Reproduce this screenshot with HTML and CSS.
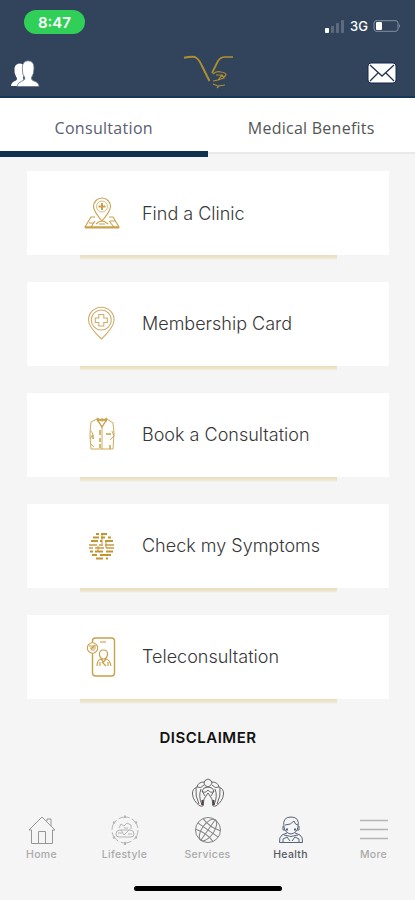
FILE: index.html
```html
<!DOCTYPE html>
<html lang="en">
<head>
    <meta charset="UTF-8">
    <meta name="viewport" content="width=device-width, initial-scale=1.0">
    <title>Health</title>
    <link rel="stylesheet" href="styles.css">
</head>
<body>

    <!-- Header -->
    <header>
        <div class="status-bar">
            <span class="time">8:47</span>
            <div class="signal">
                <svg width="20" height="13" viewBox="0 0 20 13">
                    <rect x="0" y="8" width="4" height="5" rx="1" fill="#fff"/>
                    <g fill="#5b6a7f">
                        <rect x="6" y="6" width="3" height="7" rx="1"/>
                        <rect x="11" y="3" width="3" height="10" rx="1"/>
                        <rect x="16" y="0" width="3" height="13" rx="1"/>
                    </g>
                </svg>
                <span class="network">3G</span>
                <svg width="28" height="12" viewBox="0 0 28 12">
                    <path d="M3 .7H23Q25 1 25 3V9Q25 11 23 11.3H3Q1 11 1 9V3Q1 1 3 .7Z" fill="none" stroke="#8290a0"/>
                    <rect x="3" y="2" width="6" height="8" rx="1" fill="#fff"/>
                    <path d="M26 4q2 2 0 4z" fill="#8290a0"/>
                </svg>
            </div>
        </div>
        <div class="title-bar">
            <svg class="people" width="30" height="28" viewBox="0 0 30 28">
                <path d="M1 26Q1 22 6 20.500Q8 19 6 16.500Q4 13 4.500 8Q5.500 3.500 10 3.500Q15 4 15 10Q15 15 13 17.500L15 26Z" fill="#fff"/>
                <path d="M7 26.500Q7.500 22.500 12 21Q15 20 15 18Q12 15 12.300 8Q12.500 .8 18 .8Q24 .8 24 8Q24 14 21.500 17.500Q21 20 24 21Q29 22.500 29 26.500Z" fill="#fff" stroke="#63738a" stroke-width=".8"/>
            </svg>
            <svg class="logo" width="52" height="36" viewBox="0 0 52 36" fill="none" stroke="#b0902c">
                <path d="M1 3.800Q8 2.300 12 3Q16 5 19 12L26.500 27" stroke-width="1.900"/>
                <path d="M29 19L35 7Q37.500 3 42 3H50" stroke-width="1.700"/>
                <path d="M30 20Q33 16.500 38 18Q43 18.500 43 21L40 24M33 21L39 21L35 26L30 27M39 21L41 24L35 26M30 30L35 32L42 31M34 34L36 32" stroke-width="1.200"/>
            </svg>
            <svg class="mail" width="30" height="22" viewBox="0 0 30 22">
                <rect x="1" y="1" width="28" height="20" rx="3" fill="#fff" stroke="#14264a"/>
                <path d="M3 3L15 14L27 3M3 19L11 11M27 19L19 11" fill="none" stroke="#25344d" stroke-width="1.300"/>
            </svg>
        </div>
    </header>

    <!-- Tabs -->
    <nav class="tabs">
        <a class="tab active"><span class="tab-one">Consultation</span></a>
        <a class="tab"><span class="tab-two">Medical Benefits</span></a>
    </nav>

    <!-- Health options -->
    <main>
        <section class="card">
            <svg class="icon" width="36" height="40" viewBox="0 0 36 40">
                <path d="M18 28Q9.500 18 9.500 13.500A8.500 8.500 0 0 1 26.500 13.500Q26.500 18 18 28Z"/>
                <circle cx="18" cy="13.500" r="5.500" stroke-width=".7"/>
                <path d="M18 10v7M14.500 13.500h7" stroke-width="2"/>
                <path d="M11 24H7L1 34H35L29 24H25M7 34L11 28M5 30H10M25 28L30 34M26 28H31M12 31Q18 25 24 31M15 31H21"/>
                <path d="M1 34.500H35" stroke-width="1.800"/>
            </svg>
            <span>Find a Clinic</span>
        </section>
        <section class="card">
            <svg class="icon thin" width="36" height="40" viewBox="0 0 36 40">
                <path d="M17.500 35Q4.500 23 4.500 16A12.800 12.800 0 0 1 30.100 16Q30 23 17.500 35Z"/>
                <circle cx="17.300" cy="16" r="10"/>
                <path d="M14.800 10.500H19.800V14H23.300V18.500H19.800V22H14.800V18.500H11.300V14H14.800Z"/>
            </svg>
            <span>Membership Card</span>
        </section>
        <section class="card">
            <svg class="icon coat" width="36" height="40" viewBox="0 0 36 40">
                <path d="M13 4L7 7Q6 16 6 21L7 34H18V12ZM23 4L29 8L30 18L29 34H18"/>
                <path d="M13 4L18 12L23 4M13 3L18 6L23 3M13 6L18 4L23 6" stroke-width="1.400"/>
                <path d="M16 15V20M16 23V27M16 29V33M9 20V24M26 30V34M22 19H27" stroke-width="1.500"/>
                <path d="M7 16L9 19L6 24M28 16L30 21L26 25M10 32L7 29"/>
            </svg>
            <span>Book a Consultation</span>
        </section>
        <section class="card">
            <svg class="icon symptoms" width="36" height="40" viewBox="0 0 36 40">
                <path d="M12 8H15M17 8H23M9 11.500H15M17 11.500H21M24 11.500H27M7 15H14M16 15H18M21 15H29"/>
                <path d="M5 19H13M15 19H19M21 19H30M5 22H9M11 22H20M22 22H30" stroke="#d4b476"/>
                <path d="M6 25.500H9M11 25.500H19M22 25.500H29M8 29H13M16 29H27M12 32.500H19M22 32.500H24"/>
                <path d="M18 8V18M22 16V22M14 20V26" stroke-width="1"/>
            </svg>
            <span>Check my Symptoms</span>
        </section>
        <section class="card">
            <svg class="icon tele" width="36" height="44" viewBox="0 0 36 44">
                <rect x="8.500" y="3" width="22" height="38" rx="3" stroke-width="1.400"/>
                <path d="M16 7H22"/>
                <circle cx="8.500" cy="13" r="5.200" fill="#fff"/>
                <path d="M5 11H12M6 13H12M7 15H11M11 10L7 14" stroke-width="1.200"/>
                <path d="M15.500 20Q15 15 19.500 15Q24 15 23.500 20Q22.500 24 19.500 24Q16.500 24 15.500 20ZM13 31Q13 25 17 24L19.500 27L22 24Q26 25 27 31M16 27V31M24 27V31M18 27L22 31" stroke-width="1.200"/>
            </svg>
            <span>Teleconsultation</span>
        </section>

        <h2>DISCLAIMER</h2>
        <svg class="emblem" width="34" height="30" viewBox="0 0 34 30" fill="none" stroke="#5a5658" stroke-width=".9">
            <path d="M17 1Q21 2 21 5Q20 8 17 9Q13 8 13 5Q13 2 17 1Z"/>
            <path d="M13 4Q7 4 6 9Q10 11 13 7M21 4Q27 4 28 9Q24 11 21 7M17 9Q12 9 11 13Q14 16 17 12Q20 16 23 13Q22 9 17 9"/>
            <path d="M6 9Q1 11 1.500 16Q2 23 9 28L12 28L13 21L17 15L21 21L22 28L25 28Q32 23 32.500 16Q33 11 28 9"/>
            <path d="M5 10Q4 18 8 26M10 11Q7 18 11 27M11 13L14 18M29 10Q30 18 26 26M24 11Q27 18 23 27M23 13L20 18"/>
            <path d="M11.500 22V27M22.500 22V27" stroke="#554247" stroke-width="2"/>
        </svg>
    </main>

    <!-- Bottom navigation -->
    <footer>
        <a class="item">
            <svg width="30" height="32" viewBox="0 0 30 32">
                <path d="M2 16L15 3L28 16H25.500V29.500H4.500V16ZM11.500 29V17.500H18.500V29M20 7V5H24V12"/>
            </svg>
            <span>Home</span>
        </a>
        <a class="item pale">
            <svg width="30" height="32" viewBox="0 0 30 32">
                <circle cx="15" cy="16" r="13" stroke-dasharray="11 2.600"/>
                <path d="M6 20Q6 16 10 16H20Q24 16 24 20Q24 23 21 23H9Q6 23 6 20ZM9 14L11 10L14 12L17 9L21 11V15M11 16L14 21L19 16M8 19H12M18 20H22M14 14H18"/>
                <path d="M15 1.500V4M15 28V31M3 8L5 9M25 9L27 8M3 24L5 23M25 23L27 24" stroke-width="2"/>
            </svg>
            <span>Lifestyle</span>
        </a>
        <a class="item globe">
            <svg width="30" height="32" viewBox="0 0 30 32">
                <circle cx="15" cy="16" r="12.500"/>
                <g transform="rotate(35 15 16)">
                    <ellipse cx="15" cy="16" rx="6" ry="12.500"/>
                    <path d="M2.500 16H27.500M15 3.500V28.500M4.500 9.500Q15 13 25.500 9.500M4.500 22.500Q15 19 25.500 22.500"/>
                </g>
            </svg>
            <span>Services</span>
        </a>
        <a class="item current">
            <svg width="30" height="32" viewBox="0 0 30 32">
                <path d="M8 13Q6 3 15 3Q24 3 22 13Q21 19 15 20Q9 19 8 13ZM9 11Q15 11 18 7Q19 11 22 11M7 12V16H9M23 12V16H21M11 19L6 21Q3 23 3.500 28.500H26.500Q27 23 24 21L19 19M8 21Q15 24 22 21M7 28V25L11 23L14 27M23 28V25L19 23L16 27"/>
                <path d="M10 15.500H12M18 15.500H20" stroke-width="2"/>
            </svg>
            <span>Health</span>
        </a>
        <a class="item pale">
            <svg width="30" height="32" viewBox="0 0 30 32">
                <path d="M1 6.500H29M1 15.500H29M1 24.500H29" stroke-width="1.300"/>
            </svg>
            <span>More</span>
        </a>
    </footer>
    <div class="home-indicator"></div>

</body>
</html>
```
FILE: styles.css
```css
* {
    box-sizing: border-box;
}

body {
    margin: 0;
    height: 900px;
    overflow: hidden;
    background: #f5f5f5;
    font-family: Inter, sans-serif;
    color: #383838;
    display: flex;
    flex-direction: column;
}

svg {
    display: block;
}

/* Header */
header {
    height: 98px;
    flex: none;
    background: #32445c;
    border-bottom: 2px solid #143858;
}

.status-bar {
    height: 52px;
    padding: 10px 14px 0 24px;
    display: flex;
    justify-content: space-between;
    align-items: flex-start;
}

.time {
    width: 61px;
    height: 24px;
    border-radius: 12px;
    background: #30cf57;
    color: white;
    font-size: 15px;
    font-weight: 600;
    line-height: 25px;
    text-align: center;
}

.signal {
    display: flex;
    align-items: center;
    gap: 5px;
    margin-top: 9px;
    color: white;
}

.network {
    width: 18px;
    font-size: 13px;
    font-weight: 500;
    line-height: 14px;
}

.title-bar {
    display: grid;
    grid-template-columns: 1fr 52px 1fr;
    padding: 0 18px 0 10px;
}

.people {
    margin-top: 8px;
}

.logo {
    margin-left: 5px;
    margin-top: 2px;
}

.mail {
    justify-self: end;
    margin-top: 10px;
}

/* Tabs */
.tabs {
    height: 59px;
    flex: none;
    display: flex;
    background: white;
}

.tab {
    flex: 1;
    padding-top: 19px;
    text-align: center;
    font-family: "Open Sans", sans-serif;
    font-size: 16px;
    line-height: 22px;
    color: #555;
    border-bottom: 3px solid #f5f5f5;
    box-shadow: inset 0 -2px #e9e9e9;
}

.tab.active {
    color: #596071;
    border-bottom: 6px solid #10304f;
    box-shadow: none;
}

.tab-one {
    letter-spacing: 0.3px;
}

.tab-two {
    letter-spacing: 0.25px;
}

/* Option cards */
main {
    flex: none;
    height: 655px;
    padding: 14px 26px 0 27px;
    display: flex;
    flex-direction: column;
}

.card {
    position: relative;
    flex: none;
    height: 84px;
    margin-bottom: 26.9px;
    padding-left: 57px;
    display: flex;
    align-items: center;
    gap: 22px;
    background: white;
    font-size: 18px;
    font-weight: 300;
    white-space: nowrap;
}

/* Gold strip below each card */
.card::after {
    content: "";
    position: absolute;
    top: 84px;
    left: 53px;
    width: 257px;
    height: 5px;
    background: linear-gradient(#e9dcb9, #eee6cf 60%, #f5f5f5);
}

.icon {
    fill: none;
    stroke: #c9a14a;
    stroke-width: 1.1;
}

.icon.thin {
    stroke: #cfae6b;
}

.icon.coat {
    stroke-width: 0.9;
}

.icon.symptoms {
    stroke: #c49432;
    stroke-width: 2;
}

h2 {
    margin: 3px 0 0;
    text-align: center;
    font-size: 15px;
    line-height: 20px;
    font-weight: 600;
    letter-spacing: 0.5px;
    color: #111;
}

.emblem {
    align-self: center;
    margin-top: 30px;
    flex: none;
}

/* Bottom navigation */
footer {
    flex: none;
    height: 74px;
    display: flex;
}

.item {
    flex: 1;
    padding-top: 2px;
    display: flex;
    flex-direction: column;
    align-items: center;
    font-size: 10.5px;
    line-height: 14px;
    font-weight: 500;
    letter-spacing: 0.3px;
    color: #aaa;
    fill: none;
    stroke: #969696;
}

.item span {
    margin-top: 2px;
}

.item.pale {
    stroke: #b5b5b5;
}

.item.globe {
    stroke: #858585;
}

.item.current {
    color: #555962;
    stroke: #56647a;
}

.home-indicator {
    width: 148px;
    height: 5px;
    flex: none;
    align-self: center;
    border-radius: 3px;
    background: black;
}
```
